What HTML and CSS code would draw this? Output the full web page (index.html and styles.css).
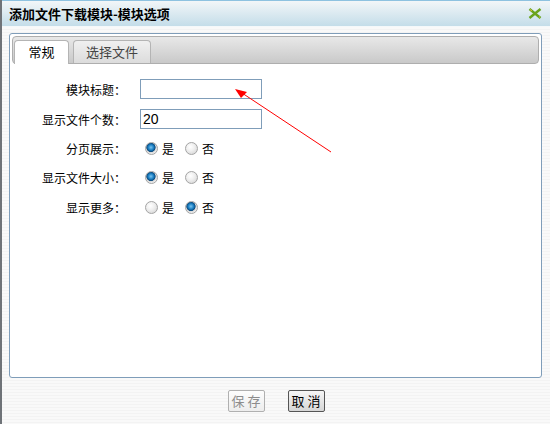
FILE: index.html
```html
<!DOCTYPE html>
<html lang="zh-CN">
<head>
    <meta charset="UTF-8">
    <title>添加文件下载模块-模块选项</title>
    <link rel="stylesheet" href="styles.css">
</head>
<body>
    <div class="dialog">
        <div class="titlebar">
            <span class="title">添加文件下载模块-模块选项</span>
            <svg class="close" width="14" height="11" viewBox="0 0 14 11">
                <path d="M1.5 1 L12.5 10 M12.5 1 L1.5 10" stroke="#6aa31c" stroke-width="2.4" fill="none"/>
                <path d="M2 1.5 L4 3 M11 8.5 L12 9.4" stroke="#e2c23a" stroke-width="1" fill="none"/>
            </svg>
        </div>

        <div class="panel">
            <div class="tabbar">
                <div class="tab active">常规</div>
                <div class="tab">选择文件</div>
            </div>

            <form class="options">
                <label class="field-label">模块标题：</label>
                <div class="field"><input type="text" class="text-input" name="title"></div>

                <label class="field-label">显示文件个数：</label>
                <div class="field"><input type="text" class="text-input" name="count" value="20"></div>

                <label class="field-label">分页展示：</label>
                <div class="field radios">
                    <input type="radio" name="paging" checked><span>是</span>
                    <input type="radio" name="paging"><span>否</span>
                </div>

                <label class="field-label">显示文件大小：</label>
                <div class="field radios">
                    <input type="radio" name="size" checked><span>是</span>
                    <input type="radio" name="size"><span>否</span>
                </div>

                <label class="field-label">显示更多：</label>
                <div class="field radios">
                    <input type="radio" name="more"><span>是</span>
                    <input type="radio" name="more" checked><span>否</span>
                </div>
            </form>
        </div>

        <div class="footer">
            <button type="button" class="btn" disabled>保 存</button>
            <button type="button" class="btn btn-cancel">取 消</button>
        </div>

        <!-- annotation arrow -->
        <svg class="arrow" width="550" height="424">
            <line x1="331" y1="152" x2="242" y2="93" stroke="#ff0000" stroke-width="1"/>
            <polygon points="235,89 247,92 241,98" fill="#ff0000"/>
        </svg>
    </div>
</body>
</html>
```

FILE: styles.css
```css
body { margin: 0; background: #6f7378; font-family: "Noto Sans CJK SC", "DejaVu Sans", sans-serif; font-size: 12px; color: #000; }
.dialog { position: relative; margin-left: 2px; width: 548px; height: 424px; overflow: hidden;
    background: repeating-linear-gradient(to bottom, #f9f9f9 0, #f9f9f9 2px, #f3f3f3 2px, #f3f3f3 3px); }

.titlebar { height: 25px; border-top: 1px solid #8ec2e0; border-bottom: 1px solid #f4f8fa; padding: 0 8px 0 7px;
    display: flex; align-items: center; justify-content: space-between;
    background: linear-gradient(to bottom, #f2f6f8, #c4dde9); }
.title { font-size: 13px; font-weight: bold; line-height: 25px; }
.close { margin-top: -1px; }

.panel { margin: 6px 8px 0 7px; height: 343px; border: 1px solid #7f9db9; border-radius: 3px; background: #fff; }

.tabbar { margin: 2px 2px 0 2px; height: 26px; border: 1px solid #aeaeae; border-radius: 4px;
    background: linear-gradient(to bottom, #e8e8e8, #c9c9c9);
    display: flex; align-items: flex-end; gap: 4px; padding-left: 1px; }
.tab { height: 22px; line-height: 22px; border: 1px solid #b4b4b4; border-bottom: none; border-radius: 4px 4px 0 0;
    text-align: center; color: #444; font-size: 13px; background: linear-gradient(to bottom, #f0f0f0, #dcdcdc); }
.tab:first-child { width: 53px; }
.tab:last-child { width: 76px; }
.tab.active { background: #fff; color: #000; margin-bottom: -1px; height: 23px; }

.options { display: grid; grid-template-columns: 116px 1fr; grid-template-rows: 30px 30px 28px 30px 30px; column-gap: 14px;
    padding-top: 10px; align-items: center; }
.field-label { text-align: right; }
.field { display: flex; align-items: center; }

.text-input { box-sizing: border-box; width: 122px; height: 20px; margin: 0; padding: 0 2px;
    border: 1px solid #7f9db9; font-family: "Liberation Sans", Arial, sans-serif; font-size: 14px; color: #000; outline: none; }

.radios input { -webkit-appearance: none; appearance: none; width: 13px; height: 13px; margin: 0 4px 0 5px;
    border-radius: 50%; border: 1px solid #a4a4a4; box-sizing: border-box;
    background: radial-gradient(circle at 40% 35%, #ffffff 0, #f0f0f0 40%, #cfcfcf 100%); }
.radios input:checked { background: radial-gradient(circle at 45% 40%, #7cc6f0 0, #1c80c4 30%, #0b4a7d 48%, #d8d8d8 55%, #f2f2f2 75%, #cfcfcf 100%); }
.radios input + span + input { margin-left: 11px; }

.footer { height: 46px; display: flex; justify-content: center; align-items: center; gap: 23px; }
.btn { box-sizing: border-box; width: 37px; height: 22px; padding: 0; border-radius: 2px;
    font-family: "Noto Sans CJK SC", sans-serif; font-size: 13px; line-height: 18px; }
.btn:disabled { border: 1px solid #b0b0b0; color: #8c8c8c; background: linear-gradient(to bottom, #fdfdfd, #ededed); }
.btn-cancel { border: 1px solid #555; color: #000; background: linear-gradient(to bottom, #f6f6f6, #d6d6d6); }

.arrow { position: absolute; top: 0; left: -2px; pointer-events: none; }
```
